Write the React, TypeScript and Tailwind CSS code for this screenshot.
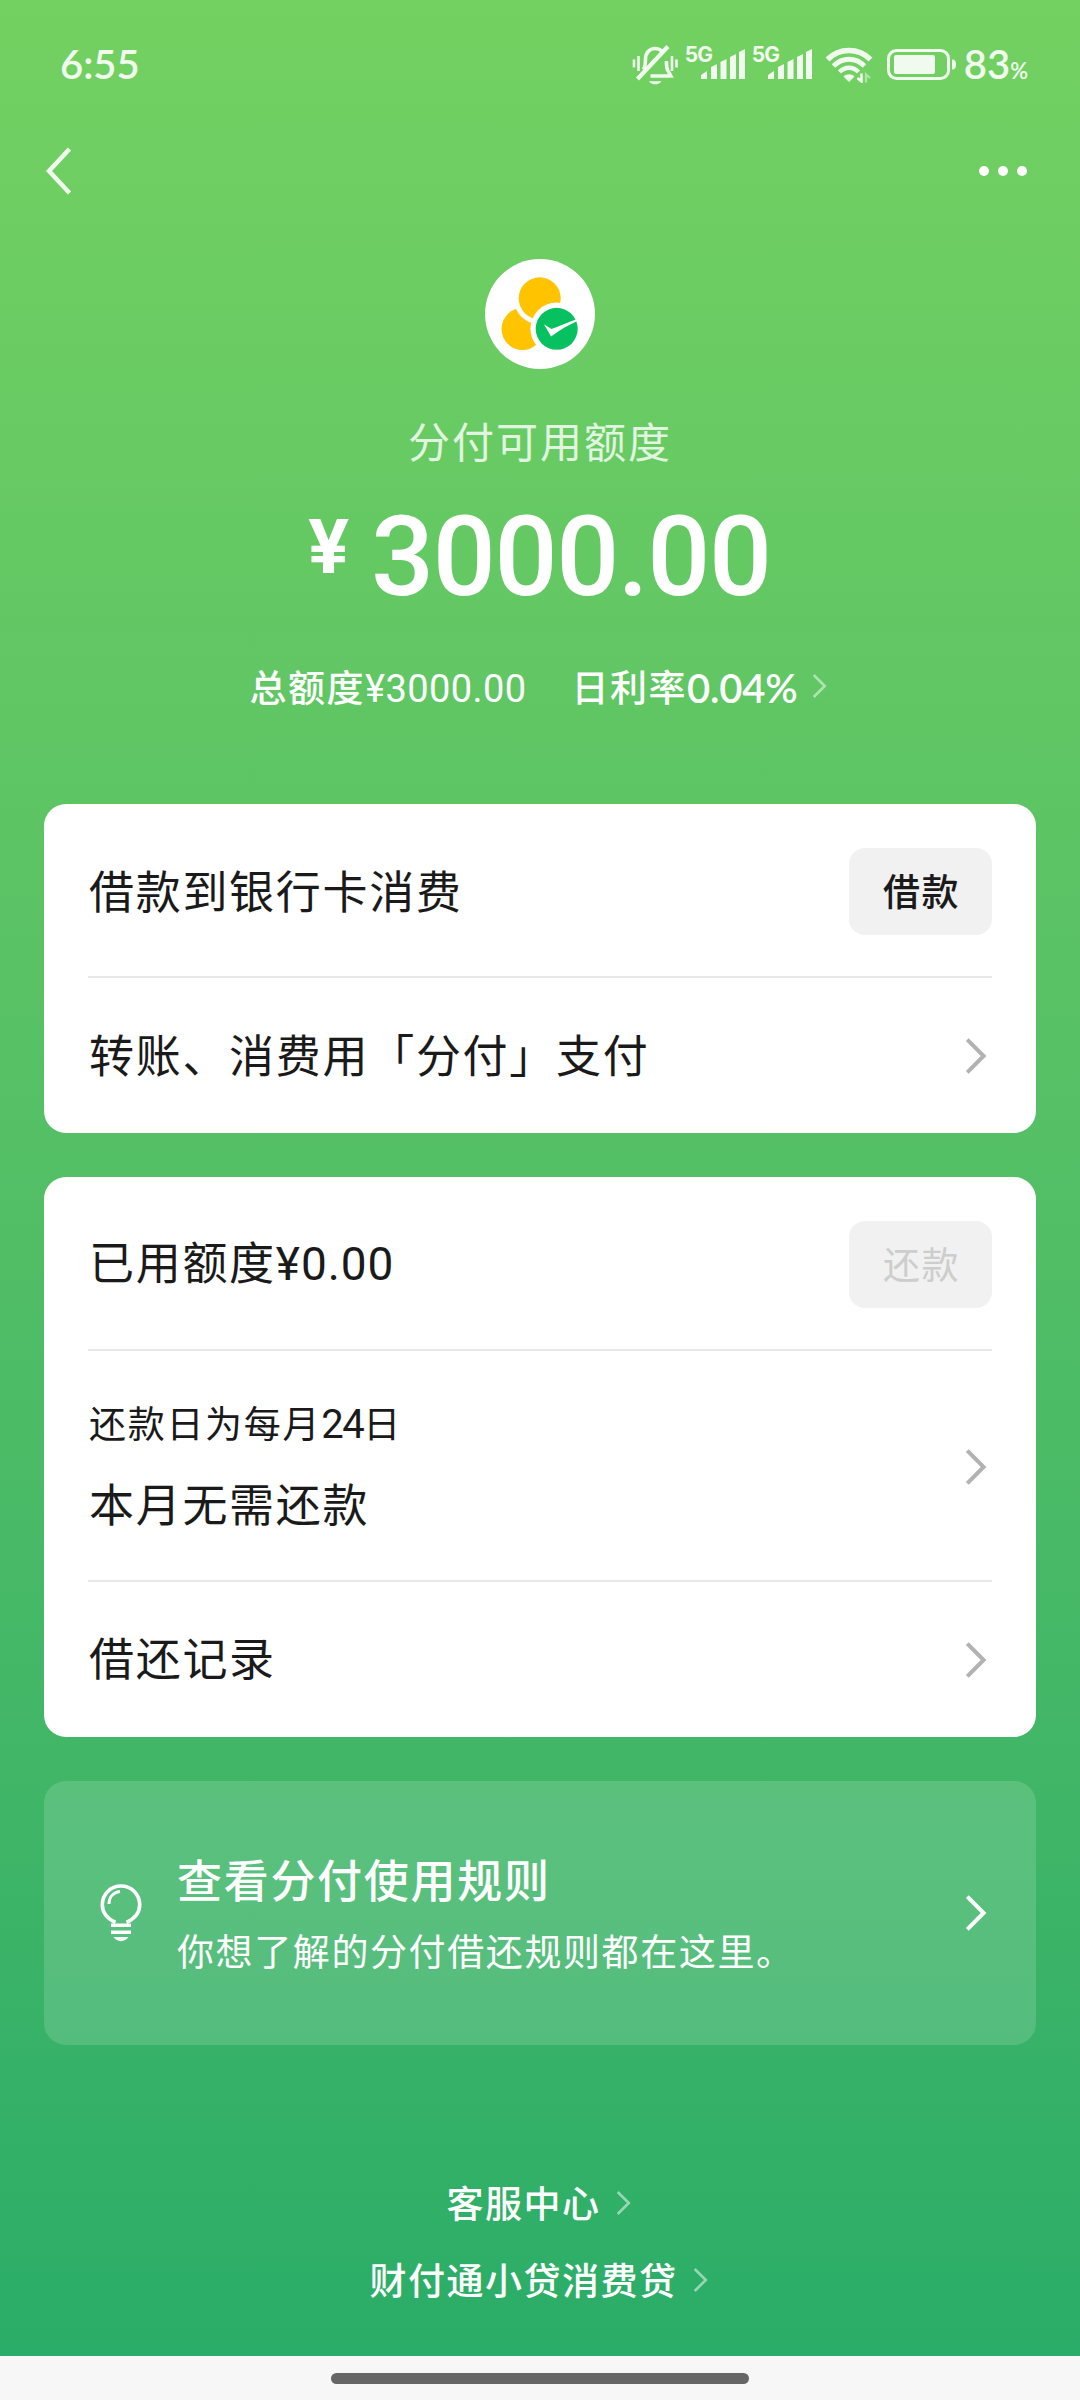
import type { ReactNode } from "react";

const Chevron = ({ className = "text-[#b2b2b2]" }: { className?: string }) => (
  <svg width="24" height="40" viewBox="0 0 24 40" fill="none" className={`shrink-0 ${className}`}>
    <path d="M3.3 3.6 19.6 20 3.3 36.4" stroke="currentColor" strokeWidth="4" />
  </svg>
);

const SmallChevron = ({ className = "" }: { className?: string }) => (
  <svg width="16" height="26" viewBox="0 0 16 26" fill="none" className={`shrink-0 text-white/50 ${className}`}>
    <path d="M1.7 2 12.8 13 1.7 24" stroke="currentColor" strokeWidth="2.6" />
  </svg>
);

const Divider = () => <div className="h-[2px] shrink-0 bg-[#e8e8e8]" />;

const ActionButton = ({ children, disabled = false }: { children: ReactNode; disabled?: boolean }) => (
  <button
    disabled={disabled}
    className={`flex h-[87px] w-[143px] items-center justify-center rounded-[16px] bg-[#f1f1f1] pb-[1px] pl-[2px] text-[37px] tracking-[1.6px] ${
      disabled ? "text-[#cdcdcd]" : "font-medium text-[#1a1a1a]"
    }`}
  >
    {children}
  </button>
);

const Signal = ({ className = "" }: { className?: string }) => (
  <div className={`relative h-[34px] w-[60px] ${className}`}>
    <span className="absolute -top-[5px] left-0 font-[Inter,sans-serif] text-[21px] leading-[26px] font-bold tracking-[-0.8px]">5G</span>
    <svg width="60" height="34" viewBox="0 0 60 34" fill="currentColor" className="absolute inset-0">
      <path d="M16 32v-4l6-4v8zM26 32V20l6-3v15zM35.500 32V15l6-3v20zM45 32V10l6-3v25zM54 32V5l6-3v30z" />
    </svg>
  </div>
);

const MutedBell = () => (
  <svg width="46" height="40" viewBox="0 0 46 40" fill="none" stroke="currentColor" strokeWidth="3.6">
    <path d="M11.500 24.500c1.600-3 2-6 2-10.500 0-6 4-10.500 9.500-10.500 3 0 5.500 1.200 7.200 3" />
    <path d="M18.500 31h20.300l-3-5.500c-1.500-2.800-1.300-5-1.300-9.500" />
    <path d="M36 1.500 5.500 34" strokeWidth="4.200" />
    <path d="M2 14.500v8M6.500 11v15M40 11v15M44.500 14.500v8" strokeWidth="2.600" />
    <path d="M17 36.200c3 4.200 9.500 4.200 12.500 0z" fill="currentColor" stroke="none" />
  </svg>
);

const Wifi = () => (
  <svg width="48" height="36" viewBox="0 0 48 36" fill="none" stroke="currentColor">
    <path d="M2.500 12.500C14.500.500 33.500.500 45.500 12.500" strokeWidth="5.600" />
    <path d="M8.500 19C17.500 10 30.500 10 39.500 19" strokeWidth="5" />
    <path d="M14.500 25C20 19.300 28 19.300 33.500 25" strokeWidth="4.400" />
    <path d="M18.500 29.500c3-3 8-3 11 0l-5.500 5.500z" fill="currentColor" stroke="none" />
    <path d="M36.500 26.500v8l-4-3.500" strokeWidth="2.600" />
    <path d="M41 35.500v-8l4 3.500" strokeWidth="2.200" opacity="0.5" />
  </svg>
);

const Battery = () => (
  <svg width="70" height="32" viewBox="0 0 70 32" fill="none">
    <rect x="1.500" y="1.500" width="60" height="28" rx="8" stroke="currentColor" strokeWidth="3" />
    <rect x="7" y="6" width="41" height="19" rx="2" fill="currentColor" />
    <path d="M65 10.500c3 0 4 2 4 5s-1 5-4 5z" fill="currentColor" />
  </svg>
);

const StatusBar = () => (
  <div className="flex h-[130px] items-start justify-between pr-[52px] pl-[60px] text-white/90">
    <span className="mt-[40px] font-[Lato,sans-serif] text-[40px] leading-[48px] font-semibold">6:55</span>
    <div className="flex items-start">
      <div className="mt-[45px]">
        <MutedBell />
      </div>
      <Signal className="mt-[47px] ml-[7px]" />
      <Signal className="mt-[47px] ml-[7px]" />
      <div className="mt-[47px] ml-[13px]">
        <Wifi />
      </div>
      <div className="mt-[49px] ml-[14px]">
        <Battery />
      </div>
      <span className="mt-[40px] ml-[7px] font-[Lato,sans-serif] text-[40px] leading-[48px] font-semibold">
        83<span className="text-[22px]">%</span>
      </span>
    </div>
  </div>
);

const NavBar = () => (
  <div className="flex h-[82px] items-center justify-between pr-[53px] pl-[43px] text-white/90">
    <svg width="30" height="52" viewBox="0 0 30 52" fill="none">
      <path d="M26.500 4 6 26 26.500 48" stroke="currentColor" strokeWidth="4.500" />
    </svg>
    <div className="flex gap-[9px] text-white">
      <i className="size-[10px] rounded-full bg-current" />
      <i className="size-[10px] rounded-full bg-current" />
      <i className="size-[10px] rounded-full bg-current" />
    </div>
  </div>
);

const Logo = () => (
  <svg width="110" height="110" viewBox="0 0 110 110">
    <circle cx="55" cy="55" r="55" fill="#fff" />
    <circle cx="37.500" cy="70" r="21" fill="#ffc300" />
    <circle cx="54.700" cy="39.300" r="26" fill="#fff" />
    <circle cx="54.700" cy="39.300" r="21" fill="#ffc300" />
    <circle cx="71.700" cy="69.800" r="26.300" fill="#fff" />
    <circle cx="71.700" cy="69.800" r="21" fill="#07c160" />
    <path d="M59 65.500c1.800.500 4 2.500 7.500 4.500 8-3 16-6.500 25-9.800l1 1.800c-9 4-18 9-26.500 15.500-2-4-5-8.500-7-12z" fill="#fff" />
  </svg>
);

const Bulb = () => (
  <svg width="42" height="58" viewBox="0 0 42 58" fill="none" stroke="currentColor">
    <path d="M15.500 38.500C8 35 2.300 29.500 2.300 20.800 2.300 10.300 10.500 2 21 2s18.700 8.300 18.700 18.800c0 8.700-5.700 14.200-13.200 17.700" strokeWidth="3.600" />
    <path d="M9 20c0-7 4.500-11.500 11-12.500" strokeWidth="3" />
    <path d="M11 41.200h20M11 48.300h20" strokeWidth="3.600" />
    <path d="M13.500 53c3.500 5.500 11.500 5.500 15 0z" fill="currentColor" stroke="none" />
  </svg>
);

const FooterLink = ({ children }: { children: ReactNode }) => (
  <div className="flex h-[77px] items-center justify-center pr-[2px] text-[37px] font-medium tracking-[1.5px]">
    {children}
    <SmallChevron className="ml-[15px]" />
  </div>
);

export default function App() {
  return (
    <div className="flex h-[2400px] w-[1080px] flex-col overflow-hidden bg-[#f7f7f7] font-['Noto_Sans_CJK_SC',sans-serif] text-[#1a1a1a]">
      <div className="flex h-[2356px] flex-col bg-linear-to-b from-[#73d161] to-[#2aad68]">
        <StatusBar />
        <NavBar />

        {/* 额度 */}
        <section className="flex h-[592px] flex-col items-center pt-[47px] text-white">
          <Logo />
          <div className="mt-[41px] text-[42px] leading-[60px] tracking-[2px] text-white/80">分付可用额度</div>
          <div className="mt-[24px] flex h-[120px] items-start pr-[1px] font-[Roboto,sans-serif] font-medium">
            <span className="mt-[13px] text-[76px] leading-[80px] font-bold">¥</span>
            <span className="mt-[3px] ml-[22px] text-[111px] leading-[120px] tracking-[-1.4px]">3000.00</span>
          </div>
          <div className="mt-[44px] flex h-[56px] items-center pr-[2px] text-[37px] leading-[56px] font-medium tracking-[1.5px]">
            总额度
            <span className="pt-[5px] font-[Roboto,sans-serif] text-[38px] font-normal tracking-[0.4px]">¥3000.00</span>
            <span className="ml-[45px]">日利率</span>
            <span className="pt-[4px] font-[Lato,sans-serif] text-[40px] font-semibold tracking-[-0.2px]">0.04%</span>
            <SmallChevron className="ml-[15px]" />
          </div>
        </section>

        <div className="mx-[44px] flex flex-col gap-[44px]">
          <div className="flex h-[329px] flex-col rounded-[22px] bg-white px-[44px] text-[45px] tracking-[1.7px]">
            <div className="flex h-[172px] items-center justify-between pt-[2px]">
              <span className="pb-[3px] pl-[1px]">借款到银行卡消费</span>
              <ActionButton>借款</ActionButton>
            </div>
            <Divider />
            <div className="flex flex-1 items-center justify-between">
              <span className="pb-[4px] pl-[1px]">转账、消费用「分付」支付</span>
              <Chevron className="mr-[4px] text-[#b2b2b2]" />
            </div>
          </div>

          <div className="flex h-[560px] flex-col rounded-[22px] bg-white px-[44px] text-[45px] tracking-[1.7px]">
            <div className="flex h-[172px] items-center justify-between pt-[2px]">
              <span className="pb-[2px] pl-[1px]">
                已用额度<span className="font-[Roboto,sans-serif] text-[46px] tracking-[0.9px]">¥0.00</span>
              </span>
              <ActionButton disabled>还款</ActionButton>
            </div>
            <Divider />
            <div className="flex h-[229px] items-center justify-between pt-[2px]">
              <div className="pb-[3px] pl-[1px]">
                <div className="text-[37px] leading-[60px] tracking-[1.7px]">
                  还款日为每月<span className="font-[Roboto,sans-serif] text-[40px] tracking-[-1.5px]">24</span>日
                </div>
                <div className="mt-[13px] leading-[70px]">本月无需还款</div>
              </div>
              <Chevron className="mr-[4px] text-[#b2b2b2]" />
            </div>
            <Divider />
            <div className="flex flex-1 items-center justify-between">
              <span className="pb-[5px] pl-[1px]">借还记录</span>
              <Chevron className="mr-[4px] text-[#b2b2b2]" />
            </div>
          </div>

          <div className="flex h-[264px] items-center rounded-[22px] bg-white/15 pr-[48px] pl-[56px] text-white">
            <Bulb />
            <div className="ml-[35px] flex-1 pb-[3px]">
              <div className="text-[45px] leading-[70px] font-medium tracking-[1.7px]">查看分付使用规则</div>
              <div className="mt-[6px] text-[37px] leading-[60px] tracking-[1.6px]">你想了解的分付借还规则都在这里。</div>
            </div>
            <Chevron className="text-white" />
          </div>
        </div>

        <footer className="mt-[119px] text-white">
          <FooterLink>客服中心</FooterLink>
          <FooterLink>财付通小贷消费贷</FooterLink>
        </footer>
      </div>

      <div className="flex h-[44px] justify-center pt-[17px]">
        <div className="h-[11px] w-[418px] rounded-full bg-[#666]" />
      </div>
    </div>
  );
}
